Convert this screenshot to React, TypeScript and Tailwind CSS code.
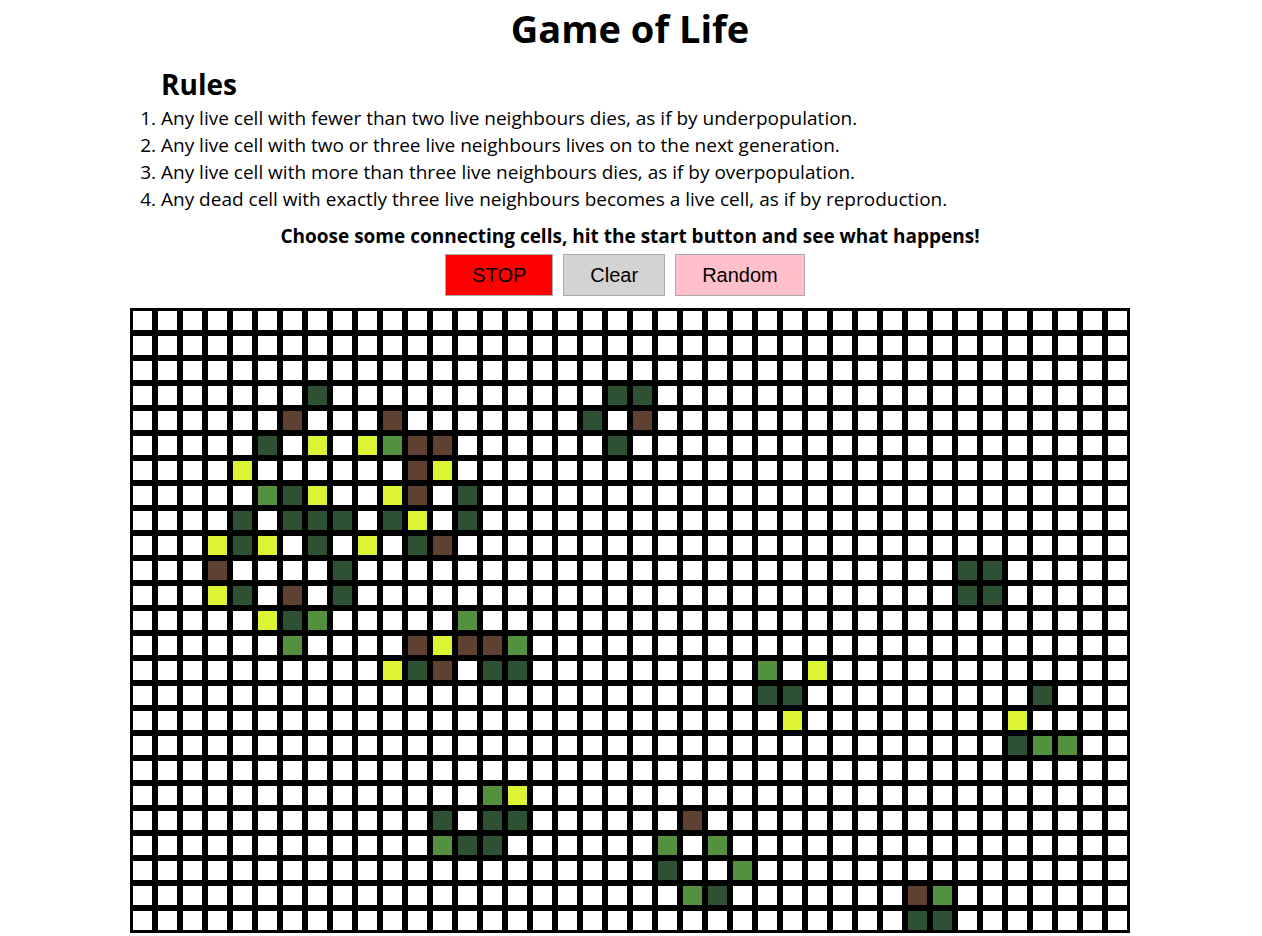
import { useState } from "react";

const COLS = 40;
const ROWS = 25;

type Age = "young" | "adult" | "old" | "ancient";

const ageClass: Record<Age, string> = {
  young: "bg-[#ddf434]",
  adult: "bg-[#53913f]",
  old: "bg-[#5e4130]",
  ancient: "bg-[#2e5133]",
};

const ageByLetter: Record<string, Age> = { Y: "young", G: "adult", B: "old", D: "ancient" };

// Live cells per row, written as column number + age letter.
const seed: Record<number, string> = {
  3: "7D 19D 20D",
  4: "6B 10B 18D 20B",
  5: "5D 7Y 9Y 10G 11B 12B 19D",
  6: "4Y 11B 12Y",
  7: "5G 6D 7Y 10Y 11B 13D",
  8: "4D 6D 7D 8D 10D 11Y 13D",
  9: "3Y 4D 5Y 7D 9Y 11D 12B",
  10: "3B 8D 33D 34D",
  11: "3Y 4D 6B 8D 33D 34D",
  12: "5Y 6D 7G 13G",
  13: "6G 11B 12Y 13B 14B 15G",
  14: "10Y 11D 12B 14D 15D 25G 27Y",
  15: "25D 26D 36D",
  16: "26Y 35Y",
  17: "35D 36G 37G",
  19: "14G 15Y",
  20: "12D 14D 15D 22B",
  21: "12G 13D 14D 21G 23G",
  22: "21D 24G",
  23: "22G 23D 31B 32G",
  24: "31D 32D",
};

type Board = (Age | null)[];

function emptyBoard(): Board {
  return Array.from({ length: COLS * ROWS }, () => null);
}

function seededBoard(): Board {
  const board = emptyBoard();
  for (const [row, cells] of Object.entries(seed)) {
    for (const cell of cells.split(" ")) {
      board[Number(row) * COLS + parseInt(cell, 10)] = ageByLetter[cell.slice(-1)];
    }
  }
  return board;
}

const rules = [
  "Any live cell with fewer than two live neighbours dies, as if by underpopulation.",
  "Any live cell with two or three live neighbours lives on to the next generation.",
  "Any live cell with more than three live neighbours dies, as if by overpopulation.",
  "Any dead cell with exactly three live neighbours becomes a live cell, as if by reproduction.",
];

const buttonClass =
  "h-[42px] border border-[#a9a9a9] px-[26px] font-['Liberation_Sans',Arial,sans-serif] text-[20px] leading-6";

export default function App() {
  const [board, setBoard] = useState<Board>(seededBoard);
  const [running, setRunning] = useState(true);

  const toggle = (index: number) =>
    setBoard((cells) => cells.map((c, i) => (i === index ? (c ? null : "young") : c)));
  const randomize = () => setBoard(emptyBoard().map(() => (Math.random() < 0.3 ? "young" : null)));

  return (
    <main className="bg-white pr-0.5 font-['Segoe_UI','Open_Sans',sans-serif] text-black">
      <h1 className="text-center text-[38px] leading-[57px] font-bold">Game of Life</h1>
      <div className="mx-auto w-fit">
        <section className="mt-1.5 pl-[31px]">
          <h2 className="text-[28px] leading-[42px] font-bold">Rules</h2>
          <ol className="list-decimal text-[19px] leading-[27px]">
            {rules.map((rule) => (
              <li key={rule}>{rule}</li>
            ))}
          </ol>
        </section>
        <p className="mt-2.5 text-center text-[19px] leading-[27px] font-bold">
          Choose some connecting cells, hit the start button and see what happens!
        </p>
        <div className="mt-1 flex justify-center gap-2.5 pr-2.5">
          <button
            type="button"
            onClick={() => setRunning(!running)}
            className={`${buttonClass} ${running ? "bg-[#ff0000]" : "bg-[#90ee90]"}`}
          >
            {running ? "STOP" : "START"}
          </button>
          <button
            type="button"
            onClick={() => setBoard(emptyBoard())}
            className={`${buttonClass} bg-[#d3d3d3]`}
          >
            Clear
          </button>
          <button type="button" onClick={randomize} className={`${buttonClass} bg-[#ffc0cb]`}>
            Random
          </button>
        </div>
        <div className="mt-3 grid grid-cols-[repeat(40,25px)]">
          {board.map((age, i) => (
            <button
              key={i}
              type="button"
              aria-label={`Row ${Math.floor(i / COLS) + 1}, column ${(i % COLS) + 1}`}
              aria-pressed={age !== null}
              onClick={() => toggle(i)}
              className={`size-[25px] border-3 border-black ${age ? ageClass[age] : "bg-white"}`}
            />
          ))}
        </div>
      </div>
    </main>
  );
}
